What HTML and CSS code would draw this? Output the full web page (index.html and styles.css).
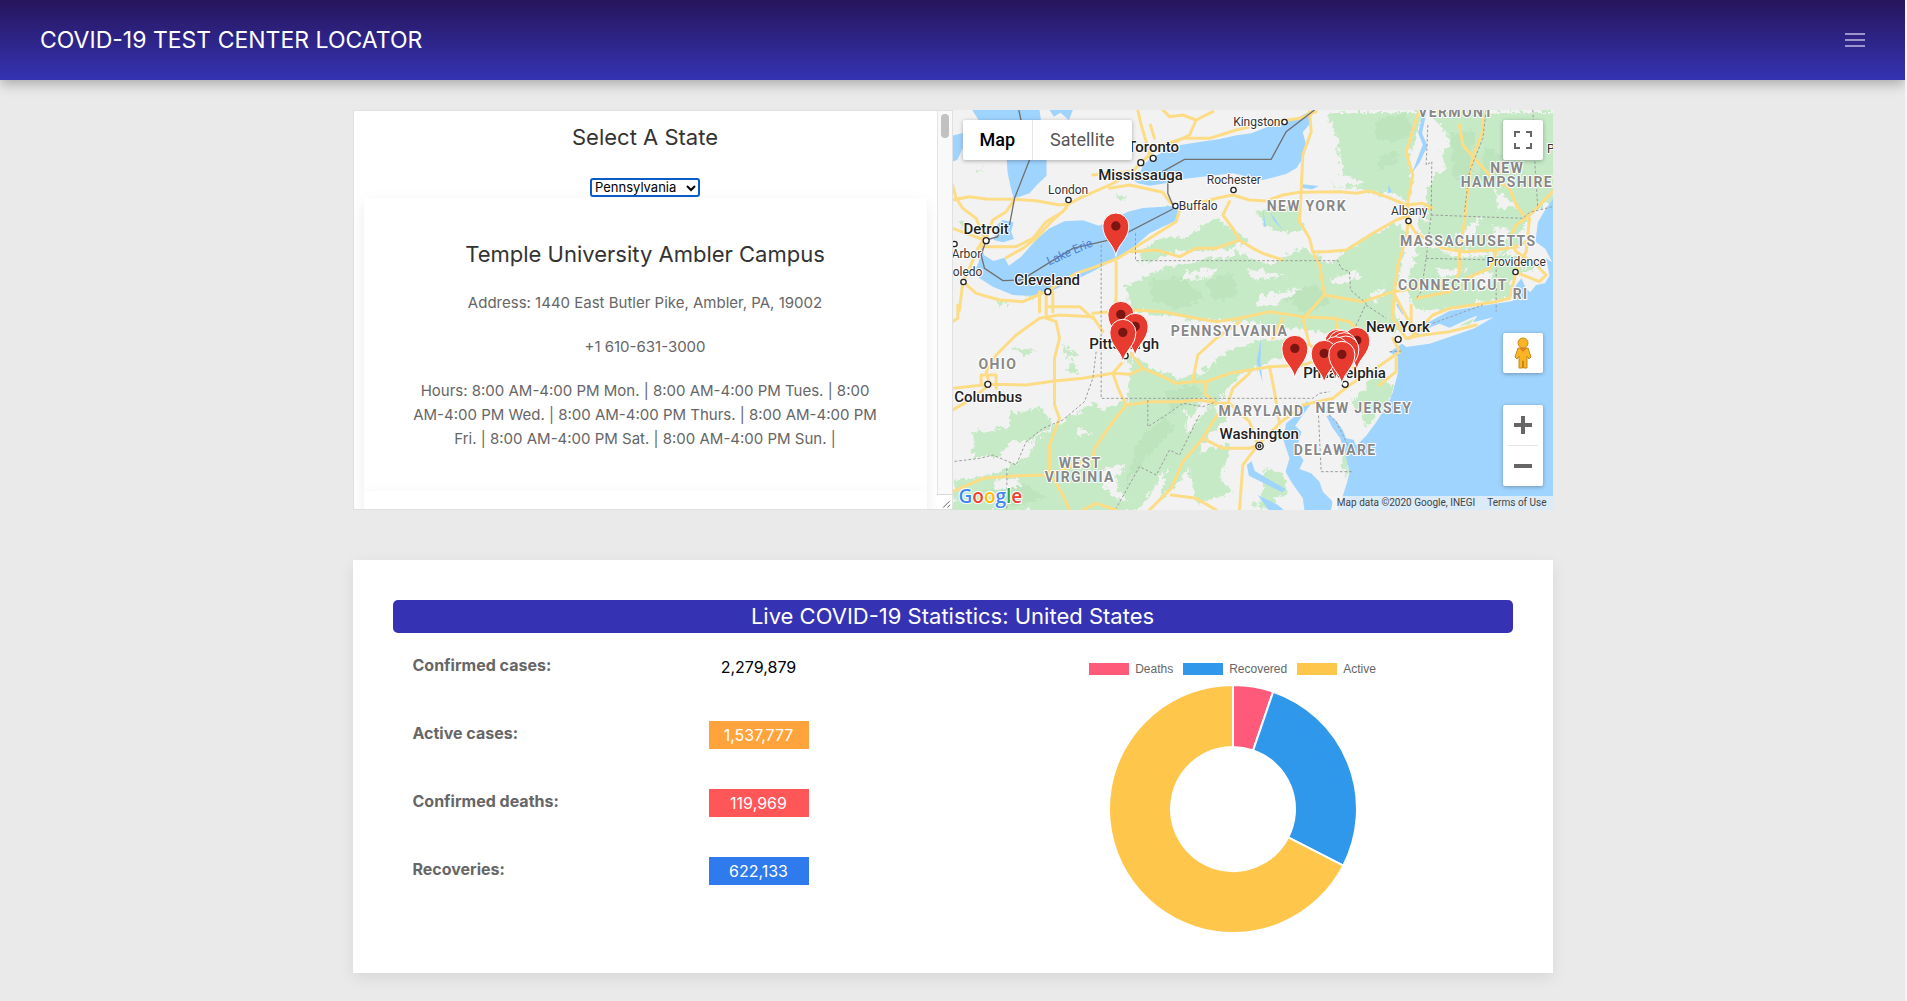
FILE: index.html
```html
<!DOCTYPE html>
<html lang="en">
<head>
<meta charset="utf-8">
<title>COVID-19 Test Center Locator</title>
<meta name="viewport" content="width=device-width, initial-scale=1">
<link rel="stylesheet" href="styles.css">
</head>
<body>
<header class="navbar">
  <a class="brand" href="#">COVID-19 TEST CENTER LOCATOR</a>
  <button class="menu-toggle" type="button" aria-label="Menu">
    <svg width="20" height="20" viewBox="0 0 20 20"><path d="M0 3h20v2H0zM0 9h20v2H0zM0 15h20v2H0z"/></svg>
  </button>
</header>
<main class="container">
  <section class="locator">
    <div class="panel">
      <div class="panel-content">
        <h3 class="title"><label for="state">Select A State</label></h3>
        <div class="select-wrap">
          <select class="state-select" id="state"><option>Pennsylvania</option></select>
          <svg class="chevron" width="10" height="8" viewBox="0 0 10 8"><path d="M1 2l4 4 4-4"/></svg>
        </div>
        <article class="center-card">
          <h3 class="title">Temple University Ambler Campus</h3>
          <p>Address: 1440 East Butler Pike, Ambler, PA, 19002</p>
          <p>+1 610-631-3000</p>
          <p>Hours: 8:00 AM-4:00 PM Mon. | 8:00 AM-4:00 PM Tues. | 8:00<br>AM-4:00 PM Wed. | 8:00 AM-4:00 PM Thurs. | 8:00 AM-4:00 PM<br>Fri. | 8:00 AM-4:00 PM Sat. | 8:00 AM-4:00 PM Sun. |</p>
        </article>
        <article class="center-card"></article>
      </div>
      <div class="scrollbar">
        <div class="thumb"></div>
        <svg class="grip" width="15" height="15" viewBox="0 0 15 15"><path d="M6 13.500l7-7M10.500 13.500l3-3"/></svg>
      </div>
    </div>
    <div class="map">
      <svg class="map-canvas" viewBox="9 15 1803 1200" preserveAspectRatio="xMidYMid slice" aria-label="Map of test centers">
        <defs>
          <filter id="rough" x="-5%" y="-5%" width="110%" height="110%">
            <feTurbulence type="turbulence" baseFrequency="0.04" numOctaves="3" seed="4"/>
            <feDisplacementMap in="SourceGraphic" scale="28" xChannelSelector="R" yChannelSelector="G"/>
          </filter>
          <g id="pin">
            <path d="M0 91C-4 54-39 42-39 0A39 39 0 0 1 39 0C39 42 4 54 0 91z" fill="#e83b2f" stroke="#fff" stroke-width="3"/>
            <circle r="14" fill="#7b1512"/>
          </g>
        </defs>
        <path class="land" d="M0 0h1820v1230H0z"/>
        <g class="green" filter="url(#rough)">
          <path d="M1130 15H1420L1390 90 1370 160 1385 230 1370 280 1330 260 1290 265 1230 245 1150 240 1110 195 1170 190 1160 110z"/>
          <path d="M1440 15H1820V260L1780 300 1740 320 1710 370 1700 420 1640 440 1540 430 1480 420 1400 370 1410 300 1450 200 1430 170 1500 110z"/>
          <path d="M1400 410L1520 450 1680 440 1770 480 1690 500 1680 570 1560 595 1440 610 1380 600 1360 520z"/>
          <path d="M1130 470L1230 400 1330 350 1370 380 1350 480 1330 570 1310 670 1180 690 1080 670 960 660 850 640 720 640 540 610 520 540 620 490 740 460 860 440 960 470 1060 420z"/>
          <path d="M700 390L740 370 790 330 850 370 890 400 830 430 690 430 570 470 560 430 640 390z"/>
          <path d="M910 310L1040 300 1060 370 1010 380 940 360z"/>
          <path d="M540 740L610 790 700 820 770 820 690 910 730 960 680 1040 620 1120 560 1215H9V1120L130 1100 220 1060 250 1000 340 940 430 890 460 910 530 880z"/>
          <path d="M640 820L750 800 830 730 920 700 1040 690 1060 730 940 770 860 810 790 900 840 920 770 990 680 1130 620 1180 660 1050 730 950 690 900z"/>
          <path d="M60 980L170 960 180 920 260 900 310 950 240 1000 170 1010 140 1050 70 1050z"/>
          <path d="M1220 860L1300 820 1330 840 1300 900 1240 960 1230 920 1200 890z"/>
          <path d="M700 1050L830 1010 830 1050 800 1110 840 1150 740 1190z"/>
          <path d="M940 1080L1000 1100 1010 1160 930 1180z"/>
          <path d="M330 710l50 30-30 15zM360 760l20 40-40-10zM190 720l60 10-40 15zM200 550l70 10-30 20zM70 190l25-8-15 14zM490 265l40 5-30 8zM640 290l30 10-20 10zM20 345l30-5-10 25zM120 575l60 15-30 10z"/>
          <path d="M900 1200l60-30 30 40zM1165 1050l35-15-15 80zM1260 640l70-20 40 40-60 20z"/>
        </g>
        <g class="forest" filter="url(#rough)">
          <path d="M1270 40l90-20 30 50-60 40-60-20zM1290 140l50-10-10 50-50 5zM1500 80l70-10-10 130-50 20zM1600 120l60 30-10 80-70-20zM600 520l90-10 70 60-70 40-90-30zM760 520l80-20 20 60-70 30zM980 560l110-30 50 50-80 40zM560 1000l80-70 30 30-90 100-60 80zM640 860l90-30 20 30-90 60zM90 1150l120-20 80 40-110 30z"/>
        </g>
        <g class="land" filter="url(#rough)">
          <path d="M1120 160l60 20-10 20 70 30-80 10-60-40zM1440 40l30 70 10 80-40 20-20 80 20 60-30-10 10-130zM1370 420l30 20-50 120-10-60zM1130 520l80-30 20 20-60 20zM880 480l130 30-100 5zM700 500l100-20-30 30-80 10zM920 570l140-30-80 50-70 10zM1170 350l110-30-40 50-60 10zM1250 560l60-20-40 50zM760 430l100 10-70 20z"/>
          <path d="M440 1090l80-20-30 60 40 60-60-30zM130 1120l60-10 20 30-80 10zM340 1040l50 10-30 20zM620 760l110 40-90-10zM790 720l80-60 20 20-80 70zM700 950l60-80 15 20-70 90zM780 900l80-70 10 15-70 80zM930 690l80-30-50 50zM390 960l30 20-50 10z"/>
          <path d="M1510 390l80-60-30 80zM1620 360l60 10-30 40zM1450 480l100 10-80 20zM1560 500l70-5-40 60zM1630 250l70 50-60 10z"/>
        </g>
        <g class="water">
          <path d="M68 15H270L291 165V212L262 240 240 265 210 275 192 280 182 240 174 200 172 165 110 80zM300 15h70l-12 30-25-22-20 12zM9 92l31-8v44l-16 36-15 6zM140 362l20-17 32 7-7 28 8 22-33 10-28-7 8-20z"/>
          <path d="M97 420L103 450 132 468 165 458 178 482 215 455 262 402 300 370 345 349 400 346 448 362 500 340 535 320 580 309 640 305 672 303 692 318 684 345 640 365 600 385 560 420 520 450 470 478 425 502 345 540 290 565 240 572 190 570 130 545 90 520 75 500 88 470z"/>
          <path d="M548 222L570 205 582 180 604 160 642 140 692 120 750 111 806 103 862 91 906 85 962 62 1030 45 1090 15 1078 60 1060 82 1070 120 1060 160 1042 188 1010 207 940 225 850 205 700 222 652 234 600 242 565 235z"/>
          <path d="M1820 268L1790 310 1765 352 1758 410 1788 432 1808 472 1790 460 1800 512 1786 535 1760 540 1742 562 1728 548 1716 520 1700 540 1690 588 1600 602 1500 618 1430 655 1395 690 1340 728 1320 742 1345 755 1346 800 1330 862 1318 892 1280 952 1250 992 1220 1022 1212 1004 1190 1000 1180 975 1160 948 1140 930 1131 934 1150 970 1172 1000 1186 1042 1200 1102 1192 1135 1178 1178 1160 1225H1820z"/>
          <path d="M1072 888L1055 912 1035 935 1010 955 1000 1000 1020 1060 1008 1100 1028 1135 1060 1180 1066 1225H1142L1150 1190 1120 1160 1110 1130 1085 1105 1050 1092 1062 1066 1040 1034 1056 980 1037 962 1060 930 1082 900zM892 1080l14-12 10 30 40 24 52 30-10 10-56-28-44-22zM925 1170l60 30 30 25h-50z"/>
          <path d="M1432 15l-14 70 16 38-24 50-22 30 18-48 14-36-14-34 16-70zM1058 238l50 5-20 10-30-4zM940 308l10 60-6-4zM962 320l38 56-28-30zM1318 240l8 20-12 6zM535 345l10-6M1340 600l20 30 2-6-14-32zM935 700l-14 70 18 60-6-60z"/>
        </g>
        <path class="land" d="M1352 712L1390 700 1420 676 1470 656 1500 668 1562 640 1584 632 1570 652 1632 637 1575 670 1500 696 1440 716 1370 726z"/>
        <path class="green" d="M1250 830l50-22 12 20-30 60-18 20-12-40zM1530 662l44-22-12 18z"/>
        <g class="roads">
          <path d="M9 285L60 275 110 282 195 283 260 287 330 300 357 297 400 275 430 262 480 240 540 210 575 172 610 140 640 120 700 100 780 100 860 75 950 55 1050 40 1100 20M9 240L20 280 40 310 80 340 105 400 85 430 60 490 40 530 30 615M9 370L50 385 105 405 90 425 200 425 250 400 290 350 340 320 357 297M195 283L170 320 130 345 110 400M170 458L220 430 260 400 310 345 350 310"/>
          <path d="M565 15L575 60 590 110 600 150M603 60L615 100M640 15L660 35 700 30 740 45 790 20M740 45L720 90 680 110M430 210L470 205 540 200M480 250L540 240 640 262 660 290 690 310 740 295 800 280 850 270 900 285 950 288 1000 270 1050 262 1170 260 1220 265 1260 258 1310 275 1370 300 1420 295 1450 310M1440 310L1340 345 1270 385 1190 435 1130 440 1090 440"/>
          <path d="M690 315L680 350 640 375 560 425 505 460 440 485 380 505 330 535 290 560 220 590 150 585 80 565 40 530M500 460L500 570 495 660 505 700M545 440L620 435 690 455 740 430 800 430 870 405 910 430 940 445 1000 465M840 290L820 330 850 370 870 405M1080 20L1085 80 1060 150 1055 260 1050 350 1080 400 1090 440 1110 480 1125 570 1080 620 1060 640"/>
          <path d="M1410 15L1395 60 1370 140 1390 210 1375 290 1376 350 1370 400 1345 480 1335 560 1330 640 1370 700M1376 350L1400 385 1480 430 1540 440 1640 435 1700 425 1750 400M1530 60L1540 120 1570 155 1555 250 1545 350 1530 440 1530 500 1500 560 1400 580M1600 15L1600 80 1570 155 1620 210 1680 250 1700 300 1730 340 1700 360 1680 400 1700 440 1760 480 1790 510 1770 530 1720 510 1695 500M1730 340L1760 310 1809 260"/>
          <path d="M1380 700L1450 630 1500 610 1570 600 1640 590 1680 580 1700 500 1730 440 1740 340M1550 520L1620 490 1640 440M1125 570L1240 590 1330 560 1400 550 1450 530M9 650L25 640 25 600M290 560L290 640 320 650 330 700 315 760 315 900 330 940 300 1020 300 1100 340 1170 360 1215M9 850L120 838 230 840 315 828 400 820 490 805 520 770"/>
          <path d="M95 840V810H140V850M120 838L110 800 140 750 200 690 270 640 330 630 430 635 460 680M290 605L390 605 430 640M270 560v60M310 560v60M9 915L70 880 120 838M430 625L550 615 640 620 740 640 800 650 870 640 960 620 1060 635 1150 640 1200 650 1250 700M545 745L580 790 640 815 680 835 730 830 770 830 840 805 960 785 1060 780 1120 760"/>
          <path d="M490 805L540 808 580 790M490 805L510 860 530 900 600 890 690 890 750 885 800 895M530 900L490 950 435 1030 430 1060 300 1110 200 1112 100 1120 9 1160M730 825L745 750 800 700 870 650M835 895L850 850 900 805M770 830L765 865 800 895 840 895 800 935 760 1000 700 1070 665 1150 600 1215M760 1000L820 1030 900 1030 925 1020 990 955 1060 900 1150 880 1200 840 1280 790 1350 740 1330 700"/>
          <path d="M500 1215L440 1195 400 1215M665 1170L740 1180 800 1215M840 895L900 950 925 1020 880 1080 870 1215M1060 640L1080 720 1200 800M960 785L975 860 990 955M1160 640L1170 720 1220 800M1370 700L1420 690 1500 680 1580 660M1340 760L1340 800 1290 840M1330 560L1400 690M1385 600v80M1000 640L970 700"/>
        </g>
        <g class="borders">
          <path d="M455 420V880H1090L1110 865 1140 860M558 385V467H1165L1175 490 1200 500 1203 555 1250 595 1225 650 1200 700M1105 890L1115 1100H1210M1120 910L1160 950 1195 1020M1435 60L1430 180 1447 170 1445 330 1430 460 1415 560 1400 580M1445 330L1720 340 1740 322 1809 305M1610 15L1600 100 1560 200 1545 320M1430 460L1640 465V590M1750 15L1757 190 1765 310"/>
          <path d="M440 740L430 820 405 890 340 945 280 970 230 1010 200 1080 130 1050 90 1060 9 1070M172 1090V1215M595 885V965L650 930 700 895 760 905 800 890M750 930L720 990 690 1050 660 1035 620 1110 570 1085 500 1210M1320 740L1360 738M1250 600L1310 640M1640 600L1640 620M1450 655L1600 600"/>
        </g>
        <path class="frontier" d="M208 15L240 165 195 280 180 360M110 405L145 395 150 365M110 405L95 450 105 490 160 527 215 525 320 460 370 430 500 400 670 312M655 230V265L670 300M630 205L705 163H965L1010 80 1095 15"/>
        <g class="dots">
          <circle cx="611" cy="160" r="9"/><circle cx="574" cy="173" r="9"/><circle cx="110" cy="407" r="9"/><circle cx="295" cy="560" r="9"/><circle cx="115" cy="838" r="9"/><circle cx="527" cy="752" r="9"/><circle cx="1346" cy="703" r="9"/><circle cx="1187" cy="838" r="9"/>
          <circle cx="357" cy="285" r="8"/><circle cx="678" cy="303" r="8"/><circle cx="852" cy="255" r="8"/><circle cx="1005" cy="51" r="8"/><circle cx="1377" cy="348" r="8"/><circle cx="1698" cy="501" r="8"/><circle cx="42" cy="531" r="8"/><circle cx="15" cy="417" r="8"/>
          <circle cx="930" cy="1023" r="11"/><circle cx="930" cy="1023" r="4"/>
        </g>
        <text class="lake" x="365" y="452" transform="rotate(-24 365 452)">Lake Erie</text>
        <g class="city">
          <text x="611" y="142">Toronto</text><text x="573" y="226">Mississauga</text><text x="110" y="388">Detroit</text><text x="293" y="541">Cleveland</text><text x="116" y="890">Columbus</text><text x="524" y="733">Pittsburgh</text><text x="1345" y="682">New York</text><text x="1185" y="820">Philadelphia</text><text x="929" y="1002">Washington</text>
        </g>
        <g class="town">
          <text x="356" y="267">London</text><text x="746" y="314">Buffalo</text><text x="853" y="237">Rochester</text><text x="922" y="62">Kingston</text><text x="1379" y="331">Albany</text><text x="1700" y="483">Providence</text><text x="51" y="459">Arbor</text><text x="54" y="513">oledo</text><text x="1804" y="143">P</text>
        </g>
        <g class="state">
          <text x="1520" y="36">VERMONT</text><text x="1673" y="203">NEW</text><text x="1672" y="246">HAMPSHIRE</text><text x="1072" y="318">NEW YORK</text><text x="1556" y="423">MASSACHUSETTS</text><text x="1510" y="556">CONNECTICUT</text><text x="1713" y="582">RI</text><text x="840" y="693">PENNSYLVANIA</text><text x="145" y="792">OHIO</text><text x="1243" y="924">NEW JERSEY</text><text x="936" y="933">MARYLAND</text><text x="1157" y="1050">DELAWARE</text><text x="392" y="1088">WEST</text><text x="391" y="1131">VIRGINIA</text>
        </g>
        <use href="#pin" x="499" y="363"/><use href="#pin" x="514" y="628"/><use href="#pin" x="557" y="664"/><use href="#pin" x="520" y="682"/>
        <use href="#pin" x="1036" y="730"/><use href="#pin" x="1222" y="706"/><use href="#pin" x="1165" y="712"/><use href="#pin" x="1175" y="715"/><use href="#pin" x="1184" y="722"/><use href="#pin" x="1189" y="732"/><use href="#pin" x="1158" y="734"/><use href="#pin" x="1124" y="745"/><use href="#pin" x="1177" y="748"/>
        <text class="google" x="27" y="1194"><tspan fill="#4285f4">G</tspan><tspan fill="#ea4335">o</tspan><tspan fill="#fbbc05">o</tspan><tspan fill="#4285f4">g</tspan><tspan fill="#34a853">l</tspan><tspan fill="#ea4335">e</tspan></text>
      </svg>
      <div class="map-types">
        <button class="map-type active" type="button">Map</button>
        <button class="map-type" type="button">Satellite</button>
      </div>
      <button class="map-control fullscreen" type="button" aria-label="Toggle fullscreen">
        <svg width="18" height="18" viewBox="0 0 18 18"><path d="M0 0h6v2H2v4H0zM12 0h6v6h-2V2h-4zM0 12h2v4h4v2H0zM16 12h2v6h-6v-2h4z"/></svg>
      </button>
      <div class="map-tools">
        <button class="map-control" type="button" aria-label="Street View">
          <svg width="18" height="32" viewBox="0 0 18 32"><path d="M4 11h10l3 9-2 2-2-3v12H9.500v-7h-1v7H5V19l-2 3-2-2z" fill="#fbb424" stroke="#c68a1c"/><circle cx="9" cy="6" r="5" fill="#fbb424" stroke="#c68a1c"/><path d="M5 11h8l-4 4z" fill="#e08220"/></svg>
        </button>
        <div class="zoom">
          <button class="zoom-button" type="button" aria-label="Zoom in"><svg width="18" height="18" viewBox="0 0 18 18"><path d="M7 0h4v7h7v4h-7v7H7v-7H0V7h7z"/></svg></button>
          <button class="zoom-button" type="button" aria-label="Zoom out"><svg width="18" height="18" viewBox="0 0 18 18"><path d="M0 7h18v4H0z"/></svg></button>
        </div>
      </div>
      <div class="attribution"><span>Map data ©2020 Google, INEGI</span><a href="#">Terms of Use</a></div>
    </div>
  </section>
  <section class="stats">
    <h3 class="stats-title">Live COVID-19 Statistics: United States</h3>
    <div class="stats-body">
      <table class="figures">
        <tbody>
          <tr><th scope="row">Confirmed cases:</th><td><span class="figure">2,279,879</span></td></tr>
          <tr><th scope="row">Active cases:</th><td><span class="figure active-cases">1,537,777</span></td></tr>
          <tr><th scope="row">Confirmed deaths:</th><td><span class="figure deaths">119,969</span></td></tr>
          <tr><th scope="row">Recoveries:</th><td><span class="figure recoveries">622,133</span></td></tr>
        </tbody>
      </table>
      <div class="chart">
        <ul class="legend">
          <li><span class="swatch swatch-deaths"></span>Deaths</li>
          <li><span class="swatch swatch-recovered"></span>Recovered</li>
          <li><span class="swatch swatch-active"></span>Active</li>
        </ul>
        <svg class="donut" width="248" height="248" viewBox="-124 -124 248 248" aria-label="Share of deaths, recovered and active cases">
          <path fill="#ff5a7a" d="M0-124A124 124 0 0 1 40.200-117.300L20.100-58.600A62 62 0 0 0 0-62z"/>
          <path fill="#3098ea" d="M40.200-117.300A124 124 0 0 1 110.300 56.600L55.200 28.300A62 62 0 0 0 20.100-58.600z"/>
          <path fill="#ffc64c" d="M110.300 56.600A124 124 0 1 1 0-124V-62A62 62 0 1 0 55.200 28.300z"/>
        </svg>
      </div>
    </div>
  </section>
</main>
</body>
</html>
```
FILE: styles.css
```css
* { box-sizing: border-box; }

body {
  margin: 0;
  min-height: 100vh;
  border-right: 2px solid #f6f6f6;
  background: #eaeaea;
  color: #666;
  font: 16px/24px Inter, "Liberation Sans", sans-serif;
}

h3, p, ul { margin: 0; padding: 0; }
button { border: 0; padding: 0; font: inherit; cursor: pointer; }

.navbar {
  display: flex;
  align-items: center;
  justify-content: space-between;
  height: 80px;
  padding: 0 40px;
  background: linear-gradient(#26155b, #3533b3);
  box-shadow: 0 4px 12px rgba(0, 0, 0, 0.28);
}
.brand { color: #fff; font-size: 23px; line-height: 33px; text-decoration: none; }
.menu-toggle { display: flex; background: none; }
.menu-toggle svg { fill: #9b93c9; }

.container { max-width: 1200px; margin: 30px auto 0; }

.locator { display: flex; height: 400px; }
.panel {
  display: flex;
  flex: 599;
  min-width: 0;
  overflow: hidden;
  border: 1px solid #e0e0e0;
  background: #fff;
}
.panel-content { flex: 1; min-width: 0; padding: 10px; overflow: hidden; text-align: center; }
.title { color: #333; font-size: 22px; font-weight: 400; line-height: 33px; }
.select-wrap { position: relative; width: 110px; margin: 24px auto 1px; display: flex; }
.state-select {
  appearance: none;
  width: 110px;
  height: 19px;
  padding: 0 3px;
  border: 2px solid #0b5bc8;
  border-radius: 3px;
  background: #fff;
  color: #000;
  font: 13px/15px Inter, "Liberation Sans", sans-serif;
}
.chevron { position: absolute; top: 6px; right: 4px; fill: none; stroke: #000; stroke-width: 2; }
.center-card {
  min-height: 100px;
  padding: 40px;
  background: #fff;
  box-shadow: 0 5px 15px rgba(0, 0, 0, 0.08);
  font-size: 15px;
  white-space: nowrap;
}
.center-card p { margin-top: 20px; }

.scrollbar {
  display: flex;
  flex-direction: column;
  align-items: center;
  justify-content: space-between;
  width: 15px;
  padding-top: 3px;
  border-left: 1px solid #e4e4e4;
  background: #f9f9f9;
}
.thumb { width: 8px; height: 24px; border-radius: 4px; background: #c1c1c1; }
.grip { border-top: 1px solid #d9d9d9; background: #fff; fill: none; stroke: #555; }

.map { position: relative; flex: 601; min-width: 0; overflow: hidden; }
.map-canvas { display: block; width: 100%; height: 100%; }
.land { fill: #f2f2f2; }
.green { fill: #c6eac6; }
.forest { fill: #b9e1b9; opacity: 0.6; }
.water { fill: #9fd4ff; }
.roads { fill: none; stroke: #fddc86; stroke-width: 9; stroke-linejoin: round; stroke-linecap: round; }
.borders { fill: none; stroke: #9c9c9c; stroke-width: 3; stroke-dasharray: 8 6; }
.frontier { fill: none; stroke: #707070; stroke-width: 4; }
.dots { fill: #fff; stroke: #222; stroke-width: 4; }
.map-canvas text { font-family: Roboto, "Liberation Sans", sans-serif; text-anchor: middle; paint-order: stroke; stroke: #fff; stroke-width: 6px; stroke-linejoin: round; }
.map-canvas .city { font-size: 45px; font-weight: 500; fill: #222; }
.map-canvas .town { font-size: 36px; fill: #333; }
.map-canvas .state { font-size: 42px; font-weight: 700; fill: #888; letter-spacing: 4px; }
.map-canvas .lake { font-size: 36px; fill: #4f7fd0; stroke: none; }
.map-canvas .google { font-family: "Open Sans", sans-serif; font-size: 57px; font-weight: 600; text-anchor: start; }

.map-types { position: absolute; top: 10px; left: 10px; display: flex; border-radius: 2px; background: #fff; box-shadow: 0 1px 4px rgba(0, 0, 0, 0.3); }
.map-type { height: 40px; padding: 0 17px; background: none; color: #565656; font: 18px/40px Roboto, sans-serif; }
.map-type.active { border-right: 1px solid #e6e6e6; color: #000; font-weight: 500; }
.map-control, .zoom {
  display: flex;
  align-items: center;
  justify-content: center;
  width: 40px;
  height: 40px;
  border-radius: 2px;
  background: #fff;
  box-shadow: 0 1px 4px rgba(0, 0, 0, 0.3);
}
.map-control.fullscreen { position: absolute; top: 10px; right: 10px; fill: #666; }
.map-tools { position: absolute; right: 10px; bottom: 24px; display: grid; gap: 32px; }
.zoom { flex-direction: column; height: 81px; padding: 0 5px; fill: #666; }
.zoom-button { display: flex; flex: 1; align-items: center; justify-content: center; width: 30px; background: none; }
.zoom-button + .zoom-button { border-top: 1px solid #e6e6e6; }
.attribution {
  position: absolute;
  right: 0;
  bottom: 0;
  display: flex;
  gap: 12px;
  padding: 0 6px 0 5px;
  background: rgba(245, 245, 245, 0.7);
  color: #444;
  font: 10px/14px Roboto, sans-serif;
}
.attribution a { color: #444; text-decoration: none; }

.stats { margin-top: 50px; padding: 40px; background: #fff; box-shadow: 0 5px 15px rgba(0, 0, 0, 0.08); }
.stats-title { border-radius: 5px; background: #3533b3; color: #fff; font-size: 22px; font-weight: 400; line-height: 33px; text-align: center; }
.stats-body { display: grid; grid-template-columns: 1fr 1fr; align-items: start; padding-top: 20px; }
.figures { margin-left: 20px; border-collapse: collapse; }
.figures th, .figures td { height: 68px; padding: 0; vertical-align: top; text-align: left; }
.figures th { width: 296px; font-weight: 700; }
.figure { display: block; width: 100px; color: #000; line-height: 28px; text-align: center; }
.figure.active-cases { background: #ffa33c; color: #fff; }
.figure.deaths { background: #ff5757; color: #fff; }
.figure.recoveries { background: #2f7aec; color: #fff; }

.chart { display: flex; flex-direction: column; align-items: center; gap: 10px; padding-top: 10px; }
.legend { display: flex; gap: 10px; list-style: none; font: 12px/12px "Liberation Sans", Arial, sans-serif; }
.legend li { display: flex; gap: 6px; }
.swatch { width: 40px; height: 12px; }
.swatch-deaths { background: #ff5a7a; }
.swatch-recovered { background: #3098ea; }
.swatch-active { background: #ffc64c; }
.donut { display: block; stroke: #fff; stroke-width: 2; }
```
